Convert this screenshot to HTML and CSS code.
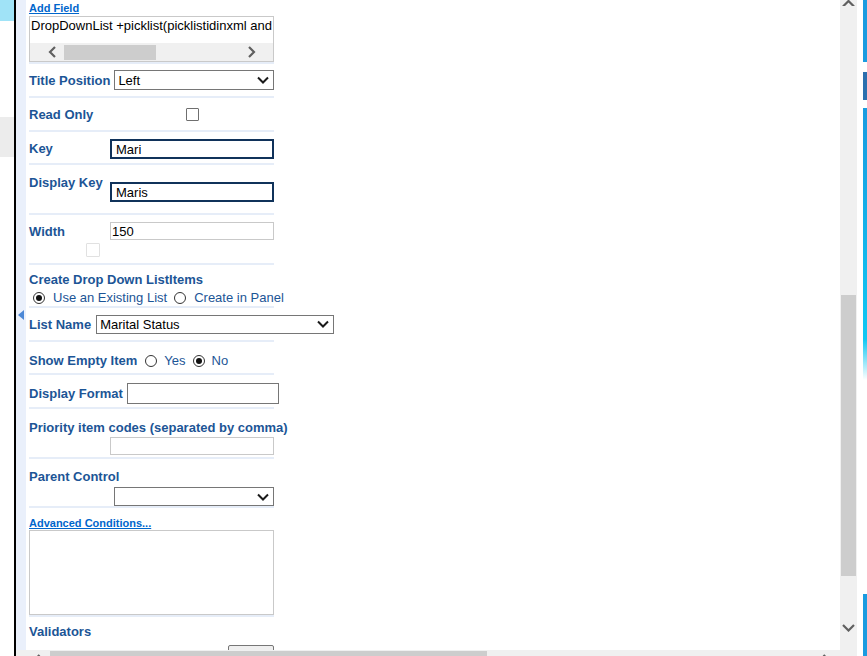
FILE: index.html
```html
<!DOCTYPE html>
<html lang="en">
<head>
  <meta charset="UTF-8">
  <title>Field Properties</title>
  <link rel="stylesheet" href="styles.css">
</head>
<body>
  <div class="rail">
    <div class="rail-tab"></div>
    <div class="rail-gray"></div>
  </div>

  <div class="frame">
    <div class="frame-body">
      <div class="gutter"><span class="gutter-arrow"></span></div>

      <div class="form">
        <div class="rows">
          <div class="row row-field">
            <a class="link" href="#">Add Field</a>
            <div class="field-box">
              <div class="field-text">DropDownList +picklist(picklistidinxml and</div>
              <div class="mini-scroll">
                <span class="ms-btn"><svg class="sb-chev" width="9" height="12" viewBox="0 0 9 12"><path d="M7 1L2 6l5 5"/></svg></span>
                <span class="ms-thumb"></span>
                <span class="ms-track"></span>
                <span class="ms-btn ms-btn-right"><svg class="sb-chev" width="9" height="12" viewBox="0 0 9 12"><path d="M2 1l5 5-5 5"/></svg></span>
              </div>
            </div>
          </div>

          <div class="row row-title">
            <span class="label label-low">Title Position</span>
            <div class="select select-title">
              <span>Left</span>
              <svg class="chev" width="12" height="8" viewBox="0 0 12 8"><path d="M1 1.5l5 5 5-5"/></svg>
            </div>
          </div>

          <div class="row row-read">
            <span class="label label-col label-low">Read Only</span>
            <span class="value-center"><span class="check"></span></span>
          </div>

          <div class="row row-key">
            <span class="label label-col">Key</span>
            <input class="text text-key" type="text" value="Mari">
          </div>

          <div class="row row-dkey">
            <span class="label label-col label-top">Display Key</span>
            <input class="text text-key text-drop" type="text" value="Maris">
          </div>

          <div class="row row-width">
            <div class="width-line">
              <span class="label label-col label-low">Width</span>
              <input class="text text-plain" type="text" value="150">
            </div>
            <span class="check check-off"></span>
          </div>

          <div class="row row-create">
            <div class="label">Create Drop Down ListItems</div>
            <div class="radios radios-create">
              <span class="radio on"></span><span class="radio-text">Use an Existing List</span>
              <span class="radio"></span><span class="radio-text">Create in Panel</span>
            </div>
          </div>

          <div class="row row-list">
            <span class="label label-low">List Name</span>
            <div class="select select-list">
              <span>Marital Status</span>
              <svg class="chev" width="12" height="8" viewBox="0 0 12 8"><path d="M1 1.5l5 5 5-5"/></svg>
            </div>
          </div>

          <div class="row row-empty">
            <span class="label">Show Empty Item</span>
            <div class="radios radios-empty">
              <span class="radio"></span><span class="radio-text">Yes</span>
              <span class="radio on"></span><span class="radio-text">No</span>
            </div>
          </div>

          <div class="row row-format">
            <span class="label">Display Format</span>
            <input class="text text-format" type="text">
          </div>

          <div class="row row-priority">
            <div class="label">Priority item codes (separated by comma)</div>
            <input class="text text-plain text-indent" type="text">
          </div>

          <div class="row row-parent">
            <div class="label">Parent Control</div>
            <div class="select select-parent">
              <span></span>
              <svg class="chev" width="12" height="8" viewBox="0 0 12 8"><path d="M1 1.5l5 5 5-5"/></svg>
            </div>
          </div>

          <div class="row row-adv">
            <a class="link" href="#">Advanced Conditions...</a>
            <textarea class="conditions"></textarea>
          </div>

          <div class="row-last">
            <div class="label">Validators</div>
            <button class="btn-add" type="button"></button>
          </div>
        </div>
      </div>

      <div class="vscroll">
        <svg class="sb-chev vs-up" width="17" height="6" viewBox="0 0 17 6"><path d="M3 6.5l5.5-5.5L14 6.5"/></svg>
        <div class="vs-thumb"></div>
        <svg class="sb-chev vs-down" width="17" height="8" viewBox="0 0 17 8"><path d="M3 1l5.5 5.5L14 1"/></svg>
      </div>
    </div>

    <div class="hscroll">
      <svg class="sb-chev hs-left" width="8" height="12" viewBox="0 0 8 12"><path d="M6.5 1L1.5 6l5 5"/></svg>
      <div class="hs-thumb"></div>
      <svg class="sb-chev hs-right" width="8" height="12" viewBox="0 0 8 12"><path d="M1.5 1l5 5-5 5"/></svg>
      <div class="hs-corner"></div>
    </div>
  </div>

  <div class="edge">
    <div class="edge-strip">
      <div class="seg-top"></div>
      <div class="seg-notch"><div class="seg-tab"></div></div>
      <div class="seg-grad"></div>
      <div class="seg-gap"></div>
      <div class="seg-bottom"></div>
    </div>
  </div>
</body>
</html>
```

FILE: styles.css
```css
* { box-sizing: border-box; }
body {
  margin: 0;
  height: 656px;
  overflow: hidden;
  display: flex;
  background: #fff;
  font-family: "Liberation Sans", Arial, sans-serif;
  font-size: 13px;
  color: #000;
}

/* left rail of the host page */
.rail { width: 14px; flex: none; }
.rail-tab { height: 21px; background: #a0e3f7; }
.rail-gray { height: 40px; margin-top: 96px; background: #ececec; }

/* dialog frame */
.frame {
  width: 843px;
  flex: none;
  border-left: 2px solid #000;
  display: flex;
  flex-direction: column;
}
.frame-body { height: 650px; flex: none; display: flex; }
.gutter { width: 10px; flex: none; background: #eaf0fb; padding: 310px 0 0 2px; }
.gutter-arrow {
  display: block;
  width: 0;
  height: 0;
  border-top: 5px solid transparent;
  border-bottom: 5px solid transparent;
  border-right: 6px solid #4c88d6;
}
.form { width: 814px; flex: none; padding-left: 3px; overflow: hidden; background: #fff; }
.rows { width: 245px; }

.row { border-bottom: 2px solid #e6edf8; }
.label {
  font-weight: bold;
  color: #1c5596;
  line-height: 16px;
  white-space: nowrap;
}
.label-low { padding-top: 2px; }
.label-col { width: 81px; flex: none; }
.link {
  display: block;
  font-size: 11px;
  font-weight: bold;
  line-height: 14px;
  color: #0066cc;
  white-space: nowrap;
}

/* field list box */
.row-field { height: 64px; padding-top: 1px; }
.field-box { margin-top: 1px; height: 46px; border: 1px solid #c9c9c9; }
.field-text {
  height: 26px;
  padding: 1px 0 0 1px;
  line-height: 16px;
  white-space: nowrap;
  overflow: hidden;
}
.mini-scroll { height: 18px; display: flex; background: #f0f0f0; }
.ms-btn { width: 34px; flex: none; display: flex; align-items: center; justify-content: flex-end; padding-right: 7px; }
.ms-btn-right { padding-right: 17px; }
.ms-thumb { width: 92px; height: 15px; margin-top: 2px; background: #cdcdcd; }
.ms-track { flex: 1; }
.sb-chev { display: block; flex: none; }
.sb-chev path { fill: none; stroke: #606060; stroke-width: 2.2; }

/* selects */
.select {
  display: flex;
  align-items: center;
  justify-content: space-between;
  flex: none;
  border: 1px solid #767676;
  padding: 0 4px 0 3px;
  background: #fff;
  white-space: nowrap;
}
.chev { display: block; }
.chev path { fill: none; stroke: #1a1a1a; stroke-width: 2; }
.select-title { width: 160px; height: 20px; margin-left: 4px; }
.select-list { width: 238px; height: 19px; margin-left: 5px; padding-left: 3px; }
.select-parent { width: 160px; height: 19px; margin: 2px 0 0 85px; }

/* inputs */
.text {
  display: block;
  flex: none;
  margin: 0;
  font: 13px "Liberation Sans", Arial, sans-serif;
  color: #000;
  background: #fff;
  outline: none;
}
.text-key { width: 164px; height: 20px; border: 2px solid #10325a; padding: 0 4px; }
.text-plain { width: 164px; height: 18px; border: 1px solid #c9c9c9; padding: 0 1px; }
.text-format { width: 152px; height: 21px; border: 1px solid #767676; padding: 0 3px; margin-left: 4px; }
.text-indent { margin: 1px 0 0 81px; }
.text-drop { margin-top: 17px; }

.check {
  display: block;
  width: 13px;
  height: 13px;
  border: 1px solid #6f6f6f;
  border-radius: 1px;
  background: #fff;
}
.check-off { width: 14px; height: 14px; border-color: #e1e1e1; margin: 3px 0 0 57px; }
.value-center { flex: 1; display: flex; justify-content: center; }

.radios { display: flex; align-items: center; line-height: 16px; color: #1c5596; white-space: nowrap; }
.radio {
  width: 12px;
  height: 12px;
  flex: none;
  border: 1px solid #333;
  border-radius: 50%;
  background: #fff;
  display: flex;
  align-items: center;
  justify-content: center;
}
.radio.on::after { content: ""; width: 6px; height: 6px; border-radius: 50%; background: #111; }
.radio-text { margin: 0 7px 0 8px; }
.radios-create { margin: 2px 0 0 4px; }
.radios-empty { margin-left: 8px; }
.radios-empty .radio-text { margin-left: 7px; }

/* rows */
.row-title { height: 34px; display: flex; align-items: center; }
.row-read { height: 34px; display: flex; align-items: center; }
.row-key { height: 33px; padding-top: 3px; display: flex; align-items: center; }
.row-dkey { height: 50px; display: flex; align-items: flex-start; }
.label-top { padding-top: 10px; }
.row-width { height: 50px; padding-top: 7px; }
.width-line { display: flex; align-items: center; }
.row-create { height: 43px; padding-top: 7px; }
.row-list { height: 34px; display: flex; align-items: center; }
.row-empty { height: 33px; padding-top: 7px; display: flex; align-items: center; }
.row-format { height: 34px; padding-top: 5px; display: flex; align-items: center; }
.row-priority { height: 50px; padding-top: 11px; }
.row-parent { height: 49px; padding-top: 10px; }
.row-adv { height: 109px; padding-top: 8px; }
.conditions {
  display: block;
  width: 245px;
  height: 85px;
  margin: 0;
  border: 1px solid #c9c9c9;
  resize: none;
  outline: none;
}
.row-last { padding-top: 7px; }
.btn-add {
  display: block;
  width: 46px;
  height: 22px;
  margin: 5px 0 0 199px;
  border: 1px solid #767676;
  border-radius: 2px;
  background: #efefef;
}

/* scrollbars */
.vscroll { width: 17px; flex: none; background: #f0f0f0; }
.vs-thumb { width: 15px; height: 281px; margin: 289px 1px 0; background: #cdcdcd; }
.vs-down { margin-top: 48px; }
.hscroll { height: 17px; flex: none; display: flex; padding-left: 17px; background: #f0f0f0; }
.hs-left { margin-top: 4px; }
.hs-thumb { width: 437px; height: 15px; margin: 1px 0 0 9px; background: #cdcdcd; }
.hs-right { margin: 4px 10px 0 auto; }
.hs-corner { width: 17px; flex: none; }

/* host page edge */
.edge { width: 10px; flex: none; padding-left: 6px; }
.edge-strip { height: 656px; display: flex; flex-direction: column; }
.seg-top { height: 62px; background: #1a9be0; }
.seg-notch { height: 46px; padding-top: 10px; }
.seg-tab { height: 28px; background: #2b6fae; }
.seg-grad { height: 272px; background: linear-gradient(#1a9be0, #0fc8f3 85%, #fff); }
.seg-gap { height: 214px; }
.seg-bottom { flex: 1; background: #1a9be0; }
```
